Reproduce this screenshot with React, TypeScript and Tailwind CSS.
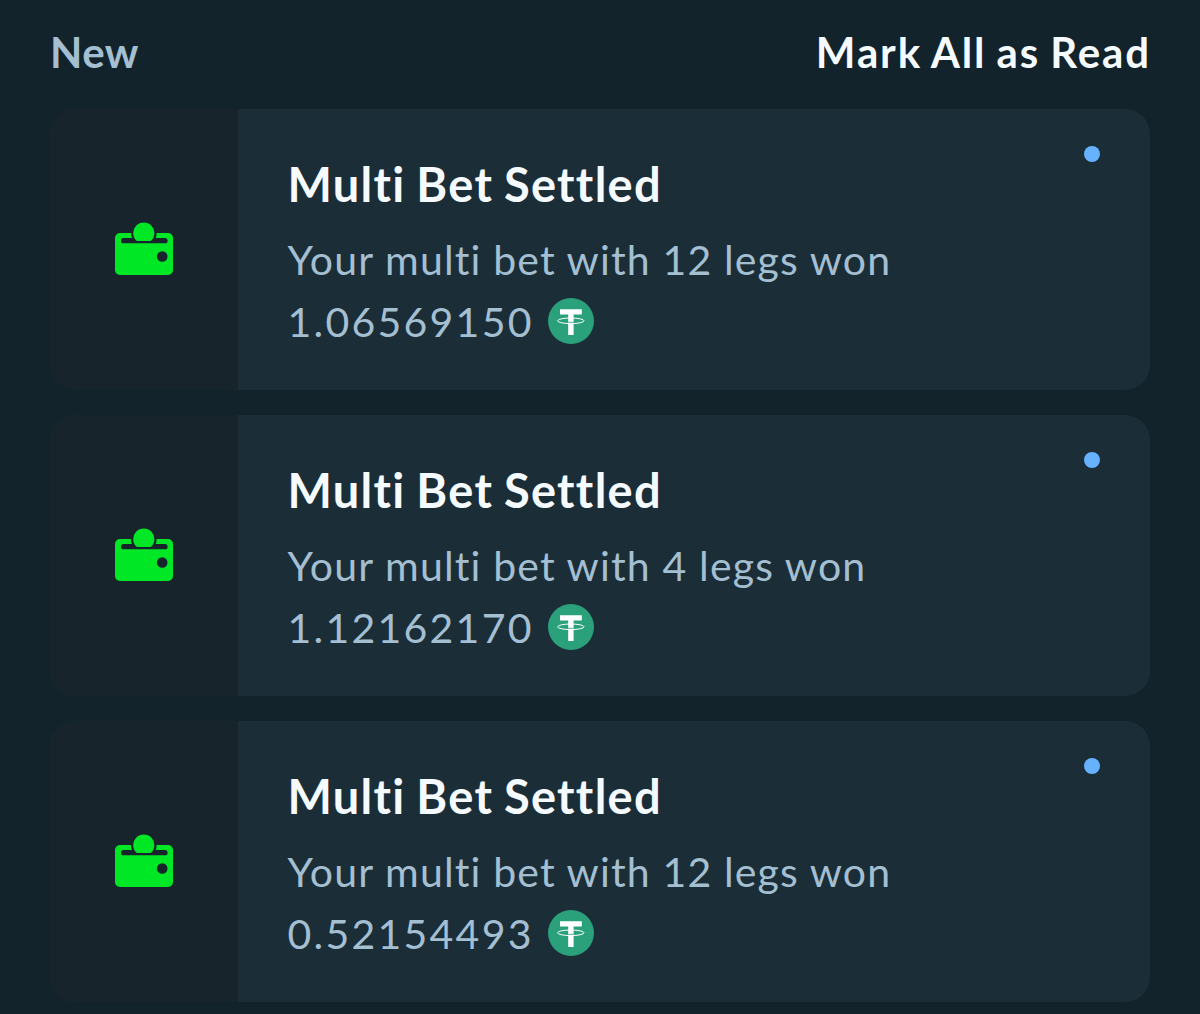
type Notification = {
    id: number;
    title: string;
    message: string;
    amount: string;
};

const notifications: Notification[] = [
    { id: 1, title: "Multi Bet Settled", message: "Your multi bet with 12 legs won", amount: "1.06569150" },
    { id: 2, title: "Multi Bet Settled", message: "Your multi bet with 4 legs won", amount: "1.12162170" },
    { id: 3, title: "Multi Bet Settled", message: "Your multi bet with 12 legs won", amount: "0.52154493" },
];

function WalletIcon() {
    return (
        <svg width="58" height="53" viewBox="0 0 58 53" fill="none" aria-hidden="true">
            <rect y="11" width="58" height="42" rx="5" fill="#00e725" />
            {/* gap around the coin, closed again below the slot */}
            <circle cx="28.8" cy="11" r="12.8" fill="#17242c" />
            <rect x="14" y="19" width="30" height="6" fill="#00e725" />
            <rect x="6" y="16.1" width="46.6" height="5.2" rx="2.6" fill="#17242c" />
            <path d="M21.85 19a10.6 10.6 0 1 1 13.9 0z" fill="#00e725" />
            <circle cx="47.2" cy="34.5" r="5.3" fill="#17242c" />
        </svg>
    );
}

function TetherIcon() {
    return (
        <svg className="-mt-[2px]" width="46" height="46" viewBox="0 0 46 46" fill="none" aria-hidden="true">
            <circle cx="23" cy="23" r="23" fill="#2aa17b" />
            <path d="M12 11.2h21.8v5.2h-8.2V37h-5.4V16.4H12z" fill="#fff" />
            <path d="M20.2 24.3h5.4" stroke="#2aa17b" strokeWidth="0.8" />
            <ellipse cx="22.8" cy="22.8" rx="13.2" ry="2.8" stroke="#fff" strokeWidth="1" />
        </svg>
    );
}

function NotificationCard({ item }: { item: Notification }) {
    return (
        <article className="flex h-[281px] overflow-hidden rounded-[25px] bg-[#1b2e38]">
            <div className="flex w-[187.5px] shrink-0 items-center justify-center bg-[#17242c] pb-[2px]">
                <WalletIcon />
            </div>
            <div className="flex flex-1 items-start justify-between pt-[37px] pr-[50px] pl-[50px]">
                <div className="pt-[7px]">
                    <h2 className="text-[47px] leading-[62px] font-bold tracking-[1.3px] [word-spacing:-2px] whitespace-nowrap text-[#f5faff]">
                        {item.title}
                    </h2>
                    <p className="mt-[14px] text-[41px] leading-[62px] tracking-[1.15px] whitespace-nowrap">{item.message}</p>
                    <div className="flex items-center gap-[14px]">
                        <span className="text-[41px] leading-[62px] tracking-[2.25px]">{item.amount}</span>
                        <TetherIcon />
                    </div>
                </div>
                <span className="size-4 rounded-full bg-[#66b2ff]" />
            </div>
        </article>
    );
}

export default function App() {
    return (
        <main className="h-[1014px] w-[1200px] overflow-hidden bg-[#13232c] px-[50px] font-['Lato',sans-serif] text-[#a3bfd1]">
            <header className="flex h-[108.5px] items-center justify-between pb-[3px] text-[42px] font-bold">
                <h1 className="tracking-[0.5px]">New</h1>
                <button className="-mr-px tracking-[1.9px] [word-spacing:-2px] text-[#f5faff]">Mark All as Read</button>
            </header>
            <section className="flex flex-col gap-[25px]">
                {notifications.map((item) => (
                    <NotificationCard key={item.id} item={item} />
                ))}
            </section>
        </main>
    );
}
